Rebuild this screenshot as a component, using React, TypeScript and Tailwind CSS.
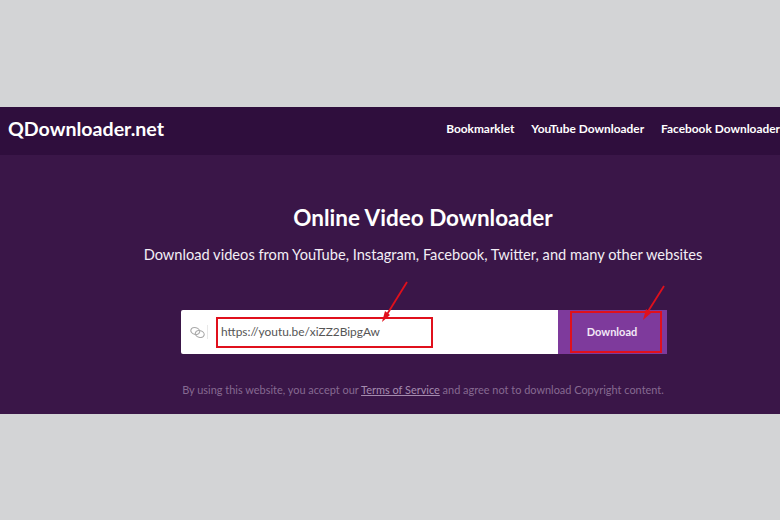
import React from 'react';

const links = ['Bookmarklet', 'YouTube Downloader', 'Facebook Downloader'];

const App: React.FC = () => {
  return (
    <div className="relative h-[520px] w-[780px] overflow-hidden bg-[#d3d4d6] pt-[107px] font-['Lato',sans-serif]">
      <header className="flex h-[48px] items-center justify-between whitespace-nowrap bg-[#2f0e3d] pb-[4px] pl-[8px]">
        <div className="text-[19.6px] font-bold text-white">QDownloader.net</div>
        <nav className="flex gap-[17px] text-[11.9px] font-bold text-white">
          {links.map((link) => (
            <a key={link}>{link}</a>
          ))}
        </nav>
      </header>
      <main className="flex h-[259px] w-[846px] flex-col items-center whitespace-nowrap bg-[#3a1648] pt-[49px]">
        <h1 className="text-[22.5px] leading-[28px] font-bold text-white">Online Video Downloader</h1>
        <p className="mt-[13px] text-[14.63px] leading-[20px] text-[#f3eef5]">
          Download videos from YouTube, Instagram, Facebook, Twitter, and many other websites
        </p>
        <div className="mt-[45px] ml-[2px] flex h-[44px] w-[486px]">
          <div className="flex flex-1 items-center rounded-l-[2px] bg-white">
            <svg className="ml-[9px] h-[15px] w-[15px] text-[#a9a9a9]" viewBox="0 0 16 16" fill="none" stroke="currentColor" strokeWidth="1.2">
              <ellipse cx="5.6" cy="6.4" rx="4.8" ry="3.6" transform="rotate(15 5.6 6.4)" />
              <ellipse cx="10.4" cy="9.6" rx="4.8" ry="3.6" transform="rotate(15 10.4 9.6)" />
            </svg>
            <div className="ml-[2px] h-[14px] w-px bg-[#e8e8e8]" />
            <div className="ml-[8px] flex h-[31px] w-[217px] items-center border-2 border-[#e0101c] pl-[3px] text-[11.9px] text-[#555]">
              https://youtu.be/xiZZ2BipgAw
            </div>
          </div>
          <div className="flex w-[109px] items-center bg-[#7e3a9c] py-[1px] pr-[5px] pl-[12px]">
            <div className="flex h-full w-full items-center justify-center border-2 border-[#e0101c] pr-[8px] text-[11px] font-bold text-[#f3e8f7]">
              Download
            </div>
          </div>
        </div>
        <p className="mt-[28px] text-[10.95px] leading-[16px] text-[#866a91]">
          By using this website, you accept our <span className="text-[#a48bae] underline">Terms of Service</span> and agree not to download Copyright content.
        </p>
      </main>
      <svg className="absolute top-[280px] left-[375px] h-[50px] w-[300px]" viewBox="0 0 300 50" fill="none">
        <path d="M32 2 L11 36" stroke="#e0101c" strokeWidth="1.8" />
        <path d="M7 42 L10 31 L15 35 Z" fill="#e0101c" />
        <path d="M289 6 L272 33" stroke="#e0101c" strokeWidth="1.8" />
        <path d="M268 40 L271 29 L276 33 Z" fill="#e0101c" />
      </svg>
    </div>
  );
};

export default App;
